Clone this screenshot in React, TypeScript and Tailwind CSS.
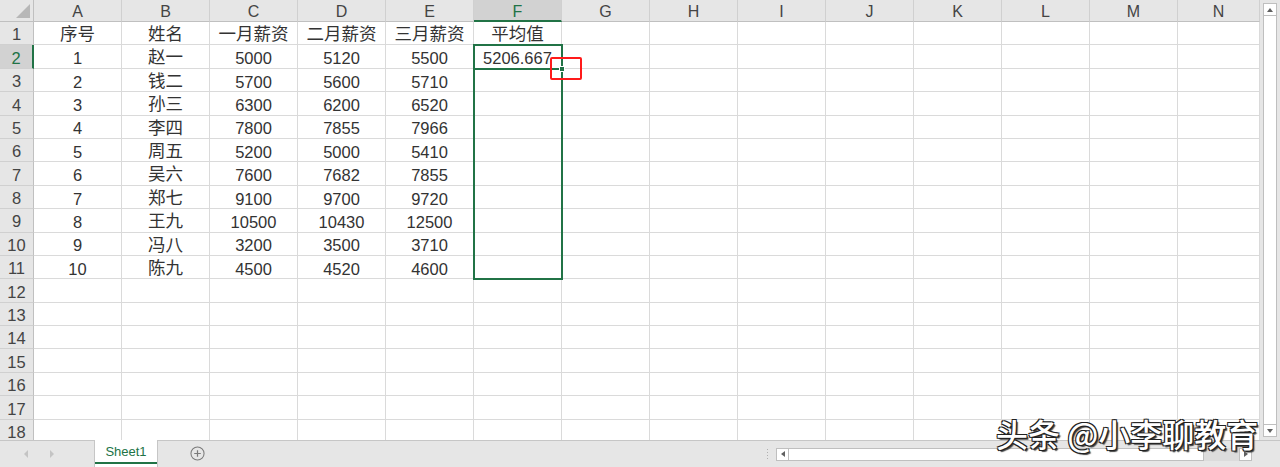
import React from 'react';

const cols = ['A', 'B', 'C', 'D', 'E', 'F', 'G', 'H', 'I', 'J', 'K', 'L', 'M', 'N'];

const data: string[][] = [
  ['序号', '姓名', '一月薪资', '二月薪资', '三月薪资', '平均值'],
  ['1', '赵一', '5000', '5120', '5500', '5206.667'],
  ['2', '钱二', '5700', '5600', '5710'],
  ['3', '孙三', '6300', '6200', '6520'],
  ['4', '李四', '7800', '7855', '7966'],
  ['5', '周五', '5200', '5000', '5410'],
  ['6', '吴六', '7600', '7682', '7855'],
  ['7', '郑七', '9100', '9700', '9720'],
  ['8', '王九', '10500', '10430', '12500'],
  ['9', '冯八', '3200', '3500', '3710'],
  ['10', '陈九', '4500', '4520', '4600'],
];

const font = "font-['Liberation_Sans','Noto_Sans_CJK_SC',sans-serif]";

function ColHeader({ label, active }: { label: string; active: boolean }) {
  return (
    <div
      className={`flex items-center justify-center pt-[3px] border-r border-[#d0d0d0] text-[16px] ${
        active
          ? 'bg-[#d2d2d2] text-[#217346] border-b-2 border-b-[#217346]'
          : 'bg-[#e6e6e6] text-[#444] border-b border-b-[#c0c0c0]'
      }`}
    >
      {label}
    </div>
  );
}

function RowHeader({ n, active }: { n: number; active: boolean }) {
  return (
    <div
      className={`flex items-center justify-center pt-[3px] border-b border-[#d0d0d0] text-[16.5px] ${
        active
          ? 'bg-[#d2d2d2] text-[#217346] border-r-2 border-r-[#217346]'
          : 'bg-[#e6e6e6] text-[#444] border-r border-r-[#c0c0c0]'
      }`}
    >
      {n}
    </div>
  );
}

export default function App() {
  const rows = Array.from({ length: 18 }, (_, i) => i + 1);

  return (
    <div className={`relative w-[1280px] h-[467px] overflow-hidden bg-[#e6e6e6] flex flex-col ${font}`}>
      <div className="flex h-[441px] border-b border-[#c6c6c6]">
        {/* sheet grid */}
        <div className="relative w-[1260px] h-full overflow-hidden bg-white">
          <div className="grid grid-cols-[34px_repeat(13,88px)_82px] grid-rows-[22px_repeat(18,23.4px)]">
            <div className="relative bg-[#e6e6e6] border-r border-b border-[#c0c0c0]">
              <div className="absolute right-[3px] bottom-[3px] w-0 h-0 border-l-[14px] border-l-transparent border-b-[14px] border-b-[#b7b7b7]" />
            </div>
            {cols.map((c) => (
              <ColHeader key={c} label={c} active={c === 'F'} />
            ))}
            {rows.map((r) => (
              <React.Fragment key={r}>
                <RowHeader n={r} active={r === 2} />
                {cols.map((c, ci) => {
                  const v = data[r - 1]?.[ci] ?? '';
                  const cjk = /[^\x00-\x7f]/.test(v);
                  return (
                    <div
                      key={c}
                      className={`flex items-center justify-center border-r border-b border-[#dadada] text-[#333] whitespace-nowrap ${
                        cjk ? 'text-[17.5px] pt-[2px]' : 'text-[16.5px] pt-[4px]'
                      }`}
                    >
                      {v}
                    </div>
                  );
                })}
              </React.Fragment>
            ))}
          </div>

          {/* selection overlays */}
          <div className="absolute left-[473px] top-[44px] w-[90px] h-[236px] border-2 border-[#217346]" />
          <div className="absolute left-[473px] top-[67.5px] w-[90px] h-[2px] bg-[#217346]" />
          <div className="absolute left-[559px] top-[66px] w-[6px] h-[6px] bg-[#217346] border border-white" />
          <div className="absolute left-[550px] top-[57px] w-[32px] h-[23px] border-2 border-[#ff1a1a] rounded-[2px]" />
        </div>

        {/* vertical scrollbar */}
        <div className="w-[20px] h-full bg-[#e6e6e6] flex flex-col items-center pt-[3px] pb-[3px]">
          <div className="w-[14px] h-[13px] bg-white border border-[#bfbfbf] flex items-center justify-center">
            <div className="w-0 h-0 border-x-[3.5px] border-x-transparent border-b-[4px] border-b-[#606060]" />
          </div>
          <div className="w-[14px] flex-1 bg-white border-x border-b border-[#bfbfbf]" />
          <div className="w-[14px] h-[12px] bg-white border border-t-0 border-[#bfbfbf] flex items-center justify-center">
            <div className="w-0 h-0 border-x-[3.5px] border-x-transparent border-t-[4px] border-t-[#606060]" />
          </div>
        </div>
      </div>

      {/* sheet tabs bar */}
      <div className="flex items-stretch h-[26px]">
        <div className="w-[94px] flex items-center gap-[22px] pl-[24px]">
          <div className="w-0 h-0 border-y-[4px] border-y-transparent border-r-[4px] border-r-[#c4c4c4]" />
          <div className="w-0 h-0 border-y-[4px] border-y-transparent border-l-[4px] border-l-[#c4c4c4]" />
        </div>
        <div className="relative w-[64px] -mt-px bg-white border-x border-[#c6c6c6] flex items-center justify-center text-[13px] text-[#217346] font-['Liberation_Sans',sans-serif]">
          <span className="-mt-[3px]">Sheet1</span>
          <div className="absolute left-0 right-0 bottom-[3px] h-[2px] bg-[#217346]" />
        </div>
        <div className="w-[78px] flex items-center justify-center">
          <svg width="15" height="15" viewBox="0 0 16 16" className="-mt-[1px]">
            <circle cx="8" cy="8" r="7" fill="none" stroke="#7a7a7a" strokeWidth="1.1" />
            <path d="M8 4.5v7M4.5 8h7" stroke="#7a7a7a" strokeWidth="1.3" />
          </svg>
        </div>
        <div className="flex-1 flex items-center">
          <div className="ml-[531px] mr-[8px] flex flex-col gap-[2px]">
            <div className="w-[1px] h-[1px] bg-[#b0b0b0]" />
            <div className="w-[1px] h-[1px] bg-[#b0b0b0]" />
            <div className="w-[1px] h-[1px] bg-[#b0b0b0]" />
            <div className="w-[1px] h-[1px] bg-[#b0b0b0]" />
          </div>
          <div className="w-[13px] h-[13px] bg-white border border-[#bfbfbf] flex items-center justify-center">
            <div className="w-0 h-0 border-y-[3.5px] border-y-transparent border-r-[4px] border-r-[#606060]" />
          </div>
          <div className="w-[415px] h-[13px] bg-white border-y border-r border-[#bfbfbf]" />
          <div className="w-[35px] h-[13px] bg-[#dcdcdc]" />
          <div className="w-[13px] h-[13px] bg-white border border-[#bfbfbf] flex items-center justify-center">
            <div className="w-0 h-0 border-y-[3.5px] border-y-transparent border-l-[4px] border-l-[#606060]" />
          </div>
        </div>
      </div>

      {/* watermark */}
      <div className="absolute left-[996px] top-[417px] text-[32px] leading-none text-white font-['Noto_Sans_CJK_SC',sans-serif] font-medium [text-shadow:1px_1px_0_#222,-1px_-1px_0_#222,1px_-1px_0_#222,-1px_1px_0_#222,2px_2px_1px_#444]">
        头条 @小李聊教育
      </div>
    </div>
  );
}
